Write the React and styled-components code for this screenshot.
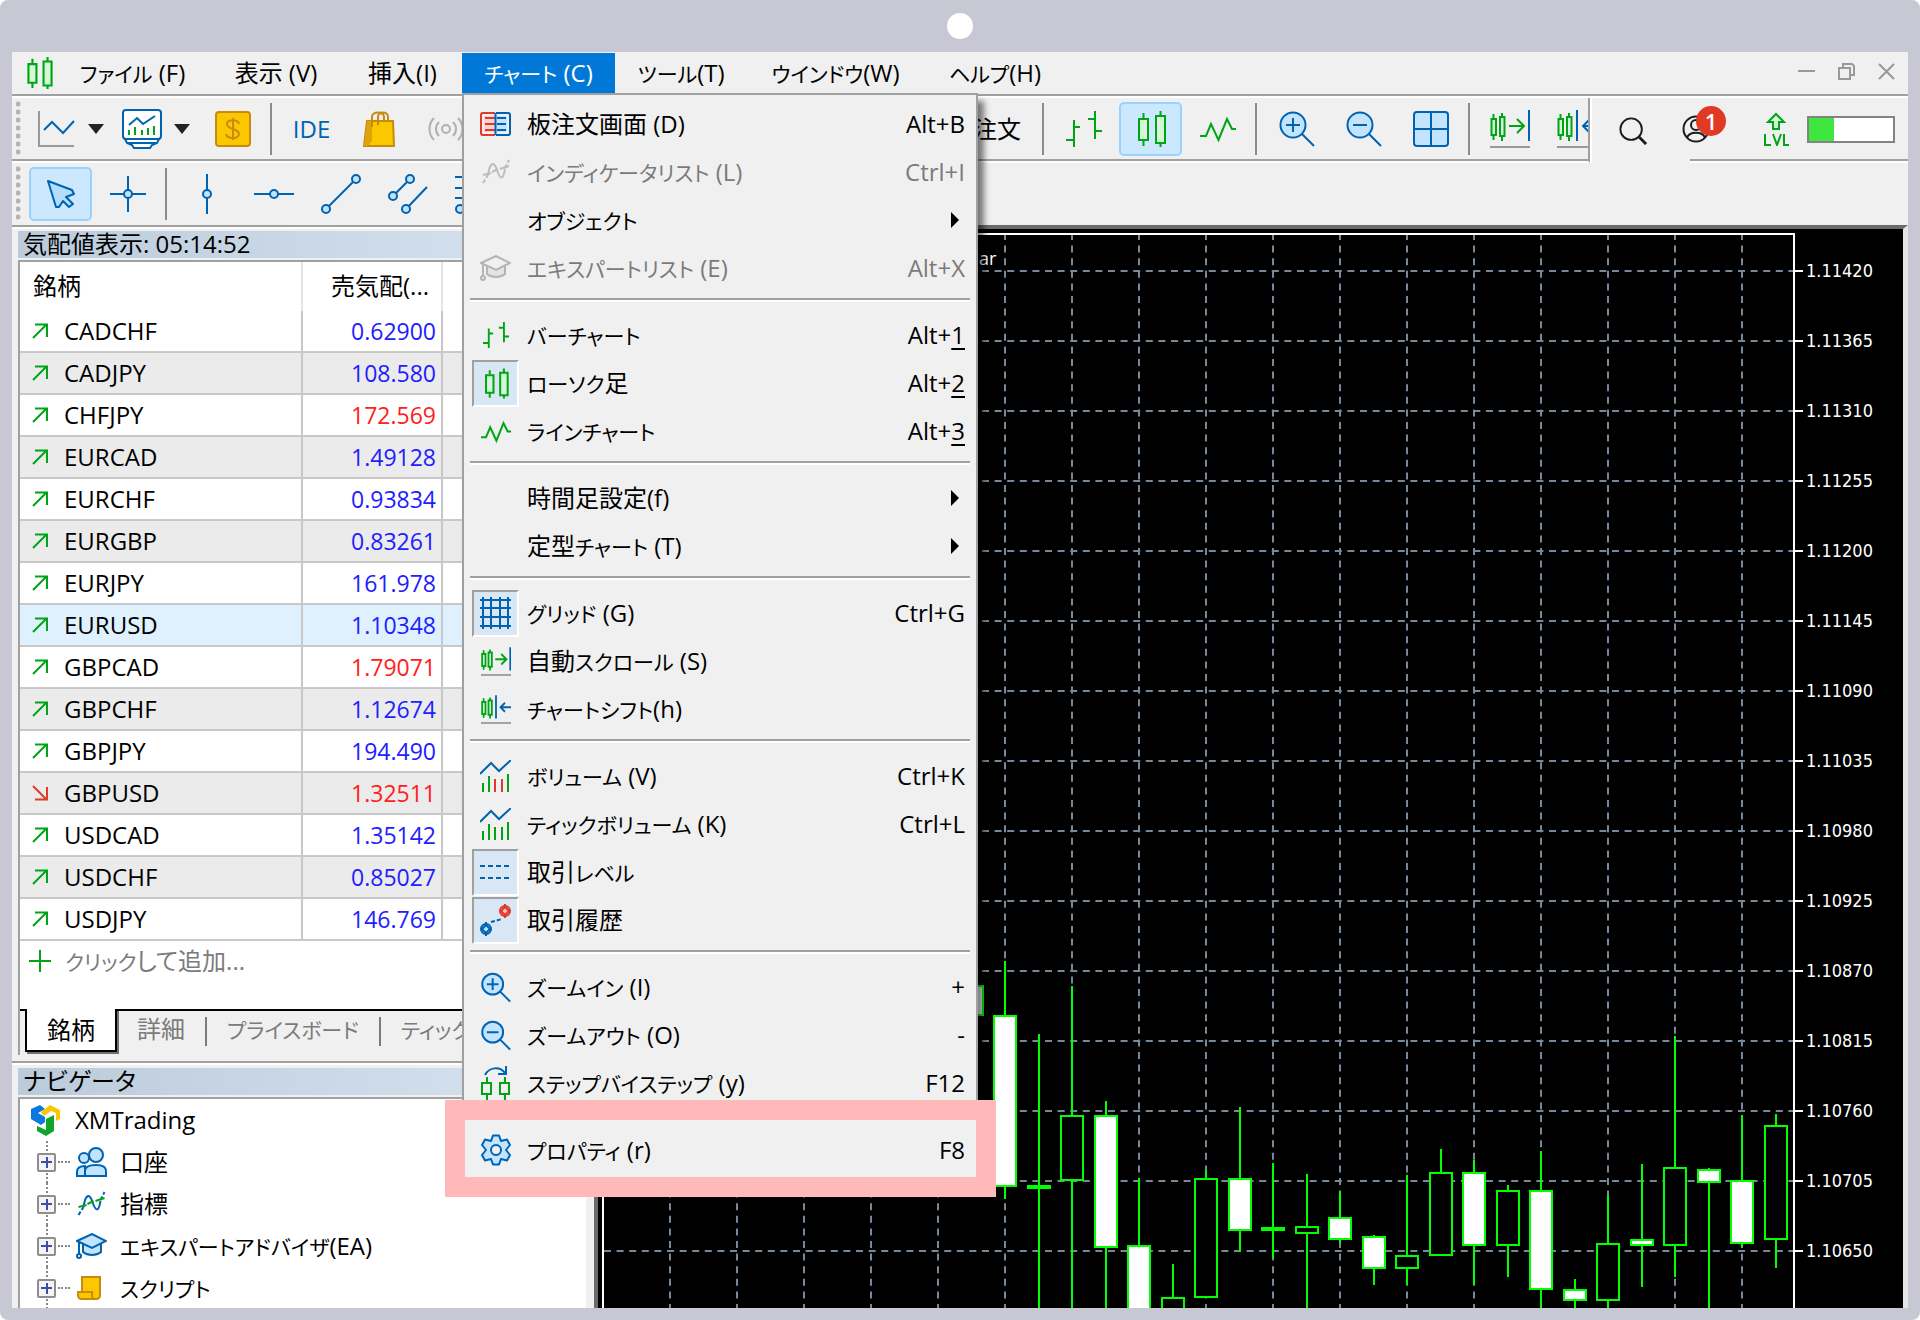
import React, { useState } from 'react';
import styled, { createGlobalStyle } from 'styled-components';

const GREEN = '#00a516';
const BLUE = '#0063b1';
const SKY = '#c3e4ff';
const RED = '#e03a2a';
const LINE = '#a0a0a0';

const GlobalStyle = createGlobalStyle`
  * { box-sizing: border-box; }
  body {
    margin: 0;
    background: #fff;
    color: #000;
    font-family: 'Open Sans', 'Noto Sans CJK JP', sans-serif;
    font-size: 24px;
    line-height: 32px;
    font-feature-settings: 'palt';
  }
  button {
    margin: 0;
    padding: 0;
    border: 0;
    background: none;
    color: inherit;
    font: inherit;
    font-feature-settings: inherit;
  }
  ul { list-style: none; margin: 0; padding: 0; }
  svg { display: block; flex: none; }
`;

/* ---------- frame ---------- */

const Device = styled.div`
  display: flex;
  flex-direction: column;
  height: 100vh;
  padding: 0 12px 12px;
  border-radius: 8px;
  background: #c8c8d4;
`;

const Camera = styled.div`
  display: flex;
  flex: none;
  align-items: center;
  justify-content: center;
  height: 52px;

  &::after {
    content: '';
    width: 26px;
    height: 26px;
    border-radius: 50%;
    background: #fff;
  }
`;

const Screen = styled.main`
  display: flex;
  flex: 1;
  flex-direction: column;
  min-height: 0;
  background: #f0f0f0;
`;

/* katakana is set a little smaller than the kanji around it */
const Kana = styled.span`
  font-size: 21px;
`;

const Label = ({ children }) => (
  <span>
    {children.split(/([ァ-ヴー]+)/).map((part, i) => (i % 2 ? <Kana key={i}>{part}</Kana> : part))}
  </span>
);

/* ---------- menu bar ---------- */

const MenuBar = styled.nav`
  display: flex;
  flex: none;
  height: 46px;
  padding: 1px 13px 0 14px;
  border-bottom: 2px solid #fff;
  box-shadow: inset 0 -2px ${LINE};
`;

const AppIcon = styled.span`
  display: flex;
  align-items: center;
  width: 30px;
  height: 40px;
`;

const MenuSlot = styled.div`
  position: relative;
  width: ${p => p.$width}px;
  height: 40px;
`;

const MenuTitle = styled.button`
  width: 100%;
  height: 40px;
  white-space: nowrap;
  background: ${p => (p.$open ? '#0078d7' : 'none')};
  color: ${p => (p.$open ? '#fff' : '#000')};
`;

const WindowButtons = styled.div`
  display: flex;
  align-items: center;
  gap: 23px;
  height: 36px;
  margin-left: auto;
`;

/* ---------- dropdown ---------- */

const Dropdown = styled.div`
  position: absolute;
  z-index: 5;
  top: 100%;
  left: 0;
  width: 516px;
  padding: 5px 0;
  border: 2px solid ${LINE};
  background: #f0f0f0;
  box-shadow: 6px 8px 6px rgba(0, 0, 0, 0.5);
`;

const MenuItem = styled.button`
  position: relative;
  display: flex;
  align-items: center;
  width: 100%;
  height: 48px;
  padding: 0 11px 0 8px;
  text-align: left;
  white-space: nowrap;
  color: ${p => (p.$off ? '#7b7b7b' : '#000')};
`;

const IconBox = styled.span`
  display: flex;
  align-items: center;
  justify-content: center;
  width: 47px;
  height: 47px;
  margin-right: 8px;
  border: 2px solid;
  border-color: ${p => (p.$on ? `${LINE} #fff #fff ${LINE}` : 'transparent')};
  background: ${p => (p.$on ? '#d9e6f3' : 'none')};
`;

const Shortcut = styled.span`
  margin-left: auto;

  u { text-underline-offset: 4px; text-decoration-thickness: 2px; }
`;

const SubArrow = styled.i`
  margin: 0 6px 0 auto;
  border: 8px solid transparent;
  border-left-color: #000;
  border-right: 0;
`;

const MenuRule = styled.hr`
  height: 4px;
  margin: 6px 6px 9px;
  border: 0;
  border-top: 2px solid ${LINE};
  background: #fff;
`;

const Highlight = styled.span`
  position: absolute;
  top: -26px;
  right: -20px;
  bottom: -23px;
  left: -19px;
  border: 20px solid #ffb9b9;
`;

/* ---------- toolbars ---------- */

const Toolbar = styled.div`
  display: flex;
  flex: none;
  align-items: center;
  height: ${p => (p.$low ? 62 : 65)}px;
`;

const ToolRow = styled.div`
  display: flex;
  flex: none;
  align-items: center;
  height: 65px;
  padding-bottom: 1px;
  border-bottom: 2px solid #fff;
  box-shadow: inset 0 -2px ${LINE};
`;

const MainRow = styled(ToolRow)`
  flex: 1;
  min-width: 0;
  overflow: hidden;
  border-right: 2px solid ${LINE};
`;

const ToolGap = styled.div`
  display: flex;
  flex: none;
  align-items: center;
  justify-content: center;
  width: 100px;
  height: 65px;
  padding-right: 16px;
  border-left: 2px solid #fff;
`;

const Grip = styled.span`
  flex: none;
  width: 5px;
  height: 56px;
  margin: 0 6px 0 4px;
  background: radial-gradient(circle at 2px 3px, #b4b4b4 2px, transparent 3px) 0 0 / 5px 8px;
`;

const Tool = styled.button`
  display: flex;
  flex: none;
  align-items: center;
  justify-content: center;
  width: 63px;
  height: 54px;
  margin: 0 2px;
  border: 2px solid ${p => (p.$on ? '#99d1ff' : 'transparent')};
  border-radius: 5px;
  background: ${p => (p.$on ? '#cce8ff' : 'none')};
  color: ${BLUE};
`;

const SplitTool = styled.button`
  display: flex;
  flex: none;
  align-items: center;
  justify-content: space-between;
  width: 86px;
  height: 54px;
  padding: 0 9px;
`;

const DownArrow = styled.i`
  border: 8px solid transparent;
  border-top: 10px solid #222;
  border-bottom: 0;
`;

const ToolRule = styled.span`
  flex: none;
  width: 2px;
  height: 52px;
  margin: 0 6px 0 4px;
  background: #8c8c8c;
`;

const OrderButton = styled.button`
  flex: none;
  height: 54px;
  margin-left: 477px;
  padding: 0 17px;
`;

const StatusRow = styled(ToolRow)`
  padding-right: 13px;
`;

const Account = styled.button`
  position: relative;
  width: 44px;
  height: 28px;
  margin: 0 37px 0 -8px;
`;

const Badge = styled.span`
  position: absolute;
  top: -9px;
  left: 14px;
  width: 30px;
  height: 30px;
  border-radius: 50%;
  background: #e03a24;
  color: #fff;
  font-size: 22px;
  font-weight: 600;
  line-height: 30px;
`;

const Meter = styled.div`
  width: 88px;
  height: 27px;
  margin-left: 18px;
  border: 2px solid #838383;
  background: linear-gradient(90deg, #3fe63f 30%, #fff 30%);
`;

/* ---------- left column ---------- */

const Body = styled.div`
  display: flex;
  flex: 1;
  min-height: 0;
`;

const Side = styled.aside`
  display: flex;
  flex: none;
  flex-direction: column;
  width: 582px;
  padding: 4px 8px 0 6px;
  border-top: 2px solid ${LINE};
  box-shadow: inset 0 2px #fff;
`;

const PanelTitle = styled.h2`
  flex: none;
  height: 27px;
  margin: 0 0 2px;
  padding-left: 5px;
  background: linear-gradient(90deg, #bccbda, #d7e4f2);
  font-size: 24px;
  font-weight: 400;
  line-height: 25px;
`;

const Watch = styled.div`
  flex: none;
  height: 749px;
  border-top: 2px solid ${LINE};
  border-left: 2px solid ${LINE};
  background: #fff;
`;

const Quotes = styled.table`
  width: 100%;
  border-collapse: collapse;
  table-layout: fixed;

  th, td {
    height: 42px;
    padding: 0 5px;
    border-right: 2px solid #c8c8c8;
    border-bottom: 2px solid #c8c8c8;
    text-align: left;
    font-weight: 400;
  }
  th { height: 48px; border-color: #e4e4e4; border-bottom-color: transparent; }
  th:first-child { width: 282px; padding-left: 13px; }
  th:nth-child(2) { width: 140px; text-align: right; padding-right: 12px; }
  td:nth-child(2) { text-align: right; }
  th:last-child, td:last-child { border-right: 0; }
`;

const Quote = styled.tr`
  background: ${p => (p.$active ? '#dff1fe' : p.$odd ? '#ebebeb' : '#fff')};
`;

const Ticker = styled.span`
  display: flex;
  align-items: center;
  gap: 16px;
  padding-left: 7px;
`;

const Price = styled.td`
  color: ${p => (p.$down ? '#ff2020' : '#2020ff')};
  font-size: 23px;
`;

const AddRow = styled.button`
  display: flex;
  align-items: center;
  gap: 14px;
  height: 40px;
  padding-left: 9px;
  color: #7b7b7b;
`;

const Tabs = styled.div`
  display: flex;
  flex: none;
  height: 46px;
  padding-left: 5px;
  overflow: hidden;
  border-left: 2px solid ${LINE};
  box-shadow: inset 0 2px #000;
`;

const Tab = styled.button`
  flex: none;
  height: ${p => (p.$on ? 43 : 36)}px;
  padding: 0 20px;
  margin-top: ${p => (p.$on ? 0 : 2)}px;
  background: ${p => (p.$on ? '#fff' : 'none')};
  border: ${p => (p.$on ? '2px solid #000' : '0')};
  border-top: 0;
  box-shadow: ${p => (p.$on ? '2px 2px #707070' : 'none')};
  color: ${p => (p.$on ? '#000' : '#7b7b7b')};
  line-height: 36px;
  white-space: nowrap;
`;

const TabRule = styled.span`
  flex: none;
  width: 2px;
  height: 29px;
  margin-top: 8px;
  background: #7b7b7b;
`;

const Divider = styled.div`
  flex: none;
  height: 4px;
  margin: 6px -8px 3px -6px;
  border-top: 2px solid ${LINE};
  background: #fff;
`;

const Tree = styled.ul`
  flex: 1;
  min-height: 0;
  overflow: hidden;
  border-top: 2px solid ${LINE};
  border-left: 2px solid ${LINE};
  background: #fff;
`;

const Root = styled.li`
  display: flex;
  align-items: center;
  gap: 15px;
  height: 42px;
  padding-left: 10px;
`;

const Node = styled.li`
  display: flex;
  align-items: center;
  height: 42px;
  padding-left: 17px;
  background: linear-gradient(#888 50%, transparent 50%) 26px 0 / 2px 4px repeat-y;
`;

const Expand = styled.button`
  width: 19px;
  height: 19px;
  border: 2px solid #8e8e8e;
  border-radius: 2px;
  background:
    linear-gradient(#3b4ea8, #3b4ea8) center / 11px 2px no-repeat,
    linear-gradient(#3b4ea8, #3b4ea8) center / 2px 11px no-repeat,
    #f4f4f4;
`;

const Stub = styled.span`
  width: 12px;
  margin: 0 6px 0 2px;
  border-top: 2px dotted #888;
`;

const NodeLabel = styled.span`
  margin-left: 13px;
  white-space: nowrap;
`;

/* ---------- chart ---------- */

const ChartPane = styled.section`
  display: flex;
  flex: 1;
  min-width: 0;
  padding: 4px 0 0 4px;
  border-top: 4px solid #6b6b6b;
  border-left: 4px solid #6b6b6b;
  border-right: 5px solid #e6e6e6;
  background: #000;
`;

const Plot = styled.div`
  position: relative;
  flex: 1;
  min-width: 0;
  overflow: hidden;
  border: 2px solid #fff;
  border-bottom: 0;
`;

const ChartTitle = styled.span`
  position: absolute;
  top: 7px;
  left: 375px;
  color: #fff;
  font-size: 18px;
`;

const Scale = styled.ul`
  width: 108px;
  padding-top: 3px;
  overflow: hidden;
  color: #fff;
  font-family: 'DejaVu Sans Condensed', 'Open Sans', sans-serif;
  font-size: 18px;

  li { display: flex; align-items: center; gap: 3px; height: 70px; }
  li::before { content: ''; width: 8px; height: 2px; background: #fff; }
`;

/* ---------- icons ---------- */

const Svg = ({ w = 36, h = 36, box, children, stroke = BLUE, ...rest }) => (
  <svg width={w} height={h} viewBox={box || '0 0 36 36'} fill="none" stroke={stroke} strokeWidth="2" aria-hidden="true" {...rest}>
    {children}
  </svg>
);

const BarsIcon = p => (
  <Svg stroke={GREEN} {...p}>
    <path d="M8 9v27M0 29h8M8 16h6M29 0v28M22 8h7M29 20h7" />
  </Svg>
);

const CandlesIcon = p => (
  <Svg stroke={GREEN} {...p}>
    <path d="M10.5 2v5M10.5 29v6M27.5 0v5M27.5 32v4" />
    <path d="M6 8h9v21H6zM23 5h9v27h-9z" fill="#d5f7d8" />
  </Svg>
);

const LineIcon = p => (
  <Svg stroke={GREEN} {...p}>
    <path d="M0 25h6l5-12 7.5 16L27 8l5 10h4" />
  </Svg>
);

const ZoomIcon = ({ minus, ...p }) => (
  <Svg {...p}>
    <circle cx="14" cy="14" r="12.5" fill={SKY} />
    <path d={minus ? 'M7 14h14M23 23l12 12' : 'M7 14h14M14 7v14M23 23l12 12'} />
  </Svg>
);

const TileIcon = p => (
  <Svg {...p}>
    <rect x="1" y="1" width="34" height="34" rx="3" fill={SKY} />
    <path d="M18 1v34M1 18h34" />
  </Svg>
);

const ScrollIcon = ({ shift, ...p }) => (
  <Svg w={40} h={38} box="0 0 40 38" stroke={GREEN} {...p}>
    <path d="M3.5 4v5M3.5 25v5M12 3v4M12 26v5" />
    <path d="M1.5 9h4.5v16H1.5zM10 7h4.5v19H10z" fill="#d5f7d8" />
    {shift ? (
      <path d="M20 0v31M40 16H26M32 10l-6 6 6 6" stroke={BLUE} />
    ) : (
      <>
        <path d="M19 16h14M27 9l7 7-7 7" />
        <path d="M39 0v31" stroke={BLUE} />
      </>
    )}
    <path d="M0 37h40" stroke="#9a9a9a" />
  </Svg>
);

const DepthIcon = p => (
  <Svg w={31} h={24} box="0 0 31 24" {...p}>
    <path d="M15 1H3a2 2 0 0 0-2 2v18a2 2 0 0 0 2 2h12" stroke={RED} />
    <path d="M4 4h11v16H4z" fill="#ffd0cc" stroke="none" />
    <path d="M16 4h11v16H16z" fill={SKY} stroke="none" />
    <path d="M5 6h10M5 12h10M5 18h10" stroke={RED} />
    <path d="M16 1h12a2 2 0 0 1 2 2v18a2 2 0 0 1-2 2H16M15.5 1v22M17 6h9M17 12h9M17 18h9" />
  </Svg>
);

const IndicatorIcon = ({ off, ...p }) => (
  <Svg w={30} h={26} box="0 0 30 26" stroke={off ? '#bdbdbd' : BLUE} {...p}>
    <path d="M2 24l5-8" strokeDasharray="4 2" />
    <path d="M7 16C9 3 13 2 16 11s6 11 8-1" />
    <path d="M24 9l4-8" strokeDasharray="4 2" />
    <path d="M2 16l8-2M11 13l6-3M19 10l9-3" stroke={off ? '#bdbdbd' : GREEN} />
  </Svg>
);

const HatIcon = ({ off, ...p }) => (
  <Svg w={31} h={26} box="0 0 31 26" stroke={off ? '#b4b4b4' : BLUE} {...p}>
    <path d="M7 10v9c5 4 13 4 18 0v-9" fill={off ? '#e4e4e4' : SKY} />
    <path d="M1 8l15-7 14 7-14 7z" fill={off ? '#f0f0f0' : SKY} />
    <path d="M3 9v12" />
    <circle cx="3" cy="23" r="2" />
  </Svg>
);

const MeshIcon = p => (
  <Svg w={31} h={32} box="0 0 31 32" {...p}>
    <path d="M3 0v32M11 0v32M20 0v32M28 0v32M0 3h31M0 11h31M0 20h31M0 29h31" />
  </Svg>
);

const VolumeIcon = ({ mixed, ...p }) => (
  <Svg w={31} h={32} box="0 0 31 32" {...p}>
    <path d="M0 14L11 3l8 8L31 0" />
    <path d="M3 23v9M9 16v16M28 14v18" stroke={GREEN} />
    <path d="M15 19v13M22 19v13" stroke={mixed ? RED : GREEN} />
  </Svg>
);

const LevelsIcon = p => (
  <Svg w={31} h={16} box="0 0 31 16" strokeDasharray="5 3" {...p}>
    <path d="M0 2h31M0 14h31" />
  </Svg>
);

const HistoryIcon = p => (
  <Svg w={31} h={32} box="0 0 31 32" {...p}>
    <path d="M6 18v14" />
    <circle cx="6" cy="25" r="5" fill={SKY} />
    <path d="M6 21l4 4-4 4-4-4z" />
    <path d="M11 18l11-3" strokeDasharray="4 2" />
    <path d="M25 0v14" stroke={RED} />
    <circle cx="25" cy="7" r="5" fill="#ffc9c4" stroke={RED} />
    <path d="M25 3l4 4-4 4-4-4z" stroke={RED} />
  </Svg>
);

const StepIcon = p => (
  <Svg w={31} h={34} box="0 0 31 34" {...p}>
    <path d="M5 9C9 1 20 0 25 7M26 0v8h-8" />
    <path d="M7 11v6M7 28v6M25 11v6M25 28v6M2 17h9v11H2zM20 17h9v11h-9z" stroke={GREEN} />
  </Svg>
);

const GearIcon = p => (
  <Svg w={30} h={32} box="0 0 30 32" {...p}>
    <path d="M12 1.5H18L20 7L26 5.5L29 11L25 16L29 21L26 26.5L20 25L18 30.5H12L10 25L4 26.5L1 21L5 16L1 11L4 5.5L10 7Z" fill={SKY} strokeLinejoin="round" />
    <circle cx="15" cy="16" r="5" fill="#f0f0f0" />
  </Svg>
);

const TrendArrow = ({ down }) => (
  <Svg w={16} h={16} box="0 0 16 16" stroke={down ? RED : GREEN}>
    <path d={down ? 'M1 1l14 14M3 14.5h12V2' : 'M1 15L15 1M3 1.5h12V14'} />
  </Svg>
);

const LogoIcon = () => (
  <svg width="30" height="32" viewBox="0 0 30 32" aria-hidden="true">
    <path d="M10 1L1 5v10l10 6 4-3v-5l-7-4 7-4z" fill="#0a78dc" />
    <path d="M11 8l9-7 10 5v9l-4 2V9l-5-2-7 5z" fill="#fbc800" />
    <path d="M16 15l8-4v16l-8 5-9-5v-5l9 4z" fill="#0da52a" />
  </svg>
);

const PeopleIcon = () => (
  <Svg w={31} h={30} box="0 0 31 30">
    <circle cx="8" cy="11" r="5" fill={SKY} />
    <path d="M1 29v-4c0-4 3-6 8-6v10z" fill={SKY} />
    <circle cx="20" cy="8" r="7" fill={SKY} />
    <path d="M9 29v-5c0-4 4-6 11-6s10 2 10 6v5z" fill={SKY} />
  </Svg>
);

const ScriptIcon = () => (
  <Svg w={31} h={24} box="0 0 31 24" stroke="#c98a10">
    <path d="M6 1h18v18c0 3-2 4-4 4H6z" fill="#fbc800" />
    <path d="M2 16h14v3c0 3 1 4 3 4H6c-3 0-4-2-4-4z" fill="#fbc800" />
  </Svg>
);

/* ---------- data ---------- */

const menuIcon = { w: 30, h: 31, strokeWidth: 2.4 };

const chartMenu = [
  { icon: <DepthIcon />, label: '板注文画面 (D)', keys: 'Alt+B' },
  { icon: <IndicatorIcon off />, label: 'インディケータリスト (L)', keys: 'Ctrl+I', off: true },
  { label: 'オブジェクト', sub: true },
  { icon: <HatIcon off />, label: 'エキスパートリスト (E)', keys: 'Alt+X', off: true },
  null,
  { icon: <BarsIcon w={26} h={26} strokeWidth={2.6} />, label: 'バーチャート', keys: 'Alt+', under: '1' },
  { icon: <CandlesIcon {...menuIcon} />, label: 'ローソク足', keys: 'Alt+', under: '2', on: true },
  { icon: <LineIcon {...menuIcon} />, label: 'ラインチャート', keys: 'Alt+', under: '3' },
  null,
  { label: '時間足設定(f)', sub: true },
  { label: '定型チャート (T)', sub: true },
  null,
  { icon: <MeshIcon />, label: 'グリッド (G)', keys: 'Ctrl+G', on: true },
  { icon: <ScrollIcon {...menuIcon} />, label: '自動スクロール (S)' },
  { icon: <ScrollIcon shift {...menuIcon} />, label: 'チャートシフト(h)' },
  null,
  { icon: <VolumeIcon mixed />, label: 'ボリューム (V)', keys: 'Ctrl+K' },
  { icon: <VolumeIcon />, label: 'ティックボリューム (K)', keys: 'Ctrl+L' },
  { icon: <LevelsIcon />, label: '取引レベル', on: true },
  { icon: <HistoryIcon />, label: '取引履歴', on: true },
  null,
  { icon: <ZoomIcon {...menuIcon} />, label: 'ズームイン (I)', keys: '+' },
  { icon: <ZoomIcon minus {...menuIcon} />, label: 'ズームアウト (O)', keys: '-' },
  { icon: <StepIcon />, label: 'ステップバイステップ (y)', keys: 'F12' },
  null,
  { icon: <GearIcon />, label: 'プロパティ (r)', keys: 'F8', marked: true },
];

const menus = [
  { label: 'ファイル (F)', width: 153 },
  { label: '表示 (V)', width: 134 },
  { label: '挿入(I)', width: 119 },
  { label: 'チャート (C)', width: 153, items: chartMenu },
  { label: 'ツール(T)', width: 132 },
  { label: 'ウインドウ(W)', width: 177 },
  { label: 'ヘルプ(H)', width: 142 },
];

const quotes = [
  ['CADCHF', '0.62900'],
  ['CADJPY', '108.580'],
  ['CHFJPY', '172.569', true],
  ['EURCAD', '1.49128'],
  ['EURCHF', '0.93834'],
  ['EURGBP', '0.83261'],
  ['EURJPY', '161.978'],
  ['EURUSD', '1.10348'],
  ['GBPCAD', '1.79071', true],
  ['GBPCHF', '1.12674'],
  ['GBPJPY', '194.490'],
  ['GBPUSD', '1.32511', true],
  ['USDCAD', '1.35142'],
  ['USDCHF', '0.85027'],
  ['USDJPY', '146.769'],
];

const prices = [
  '1.11420', '1.11365', '1.11310', '1.11255', '1.11200', '1.11145', '1.11090', '1.11035',
  '1.10980', '1.10925', '1.10870', '1.10815', '1.10760', '1.10705', '1.10650',
];

// high, body top, body bottom, low, filled
const candles = [
  [751, 751, 780, 780, 1],
  [726, 781, 951, 964, 1],
  [799, 951, 953, 1100, 0],
  [751, 881, 945, 1100, 0],
  [866, 881, 1012, 1100, 1],
  [943, 1011, 1100, 1100, 1],
  [1029, 1063, 1100, 1100, 0],
  [935, 944, 1062, 1062, 0],
  [872, 944, 995, 1017, 1],
  [928, 993, 995, 1023, 0],
  [939, 992, 998, 1100, 0],
  [956, 983, 1004, 1008, 1],
  [1000, 1002, 1033, 1050, 1],
  [940, 1021, 1033, 1050, 0],
  [914, 938, 1020, 1020, 0],
  [925, 938, 1010, 1050, 1],
  [950, 956, 1010, 1042, 0],
  [916, 956, 1054, 1100, 1],
  [1044, 1055, 1065, 1100, 1],
  [960, 1009, 1065, 1100, 0],
  [929, 1005, 1010, 1052, 1],
  [801, 933, 1010, 1042, 0],
  [933, 935, 947, 1100, 1],
  [880, 946, 1008, 1012, 1],
  [879, 891, 1004, 1033, 0],
];

const Candles = () => (
  <svg width="100%" height="100%">
    <g stroke="#778899" strokeWidth="2" strokeDasharray="7 5.6">
      {Array.from({ length: 17 }, (_, i) => (
        <line key={i} x1={66 + i * 67} x2={66 + i * 67} y1="-2" y2="1100" />
      ))}
      {prices.map((p, i) => (
        <line key={p} x1="0" x2="1190" y1={36 + i * 70} y2={36 + i * 70} />
      ))}
    </g>
    <g stroke="#00ff00" strokeWidth="2">
      {candles.map(([high, top, bottom, low, filled], i) => {
        const x = Math.round(367.5 + i * 33.5);
        return (
          <g key={i}>
            <line x1={x} x2={x} y1={high} y2={low} />
            <rect x={x - 11} y={top} width="22" height={bottom - top} fill={filled ? '#fff' : '#000'} />
          </g>
        );
      })}
    </g>
  </svg>
);

const ChartMenu = ({ items }) => (
  <Dropdown role="menu">
    {items.map((item, i) =>
      item === null ? (
        <MenuRule key={i} />
      ) : (
        <MenuItem key={i} role="menuitem" $off={item.off}>
          <IconBox $on={item.on}>{item.icon}</IconBox>
          <Label>{item.label}</Label>
          {item.keys && (
            <Shortcut>
              {item.keys}
              {item.under && <u>{item.under}</u>}
            </Shortcut>
          )}
          {item.sub && <SubArrow />}
          {item.marked && <Highlight />}
        </MenuItem>
      )
    )}
  </Dropdown>
);

const App = () => {
  const [open, setOpen] = useState('チャート (C)');
  const [active, setActive] = useState('EURUSD');

  return (
    <>
      <GlobalStyle />
      <Device>
        <Camera />
        <Screen>
          <MenuBar>
            <AppIcon><CandlesIcon w={28} h={32} box="4 0 30 36" strokeWidth={2.4} /></AppIcon>
            {menus.map(m => (
              <MenuSlot key={m.label} $width={m.width}>
                <MenuTitle $open={open === m.label} onClick={() => setOpen(m.label)}>
                  <Label>{m.label}</Label>
                </MenuTitle>
                {open === m.label && m.items && <ChartMenu items={m.items} />}
              </MenuSlot>
            ))}
            <WindowButtons>
              <button aria-label="minimize">
                <Svg w={17} h={17} box="0 0 17 17" stroke="#999"><path d="M0 8h17" /></Svg>
              </button>
              <button aria-label="restore">
                <Svg w={17} h={17} box="0 0 17 17" stroke="#999">
                  <path d="M1 5h11v11H1zM5 4V1h9l2 2v9h-3" />
                </Svg>
              </button>
              <button aria-label="close">
                <Svg w={17} h={17} box="0 0 17 17" stroke="#999"><path d="M1 1l15 15M16 1L1 16" /></Svg>
              </button>
            </WindowButtons>
          </MenuBar>

          <Toolbar>
            <MainRow>
              <Grip />
              <SplitTool aria-label="line">
                <Svg w={40} h={36} box="0 0 40 36">
                  <path d="M3 0v35h35" stroke="#9a9a9a" />
                  <path d="M8 19l8-8 11 11 11-12" />
                </Svg>
                <DownArrow />
              </SplitTool>
              <SplitTool aria-label="indicators">
                <Svg w={40} h={40} box="0 0 40 40">
                  <path d="M3 30h34l-2 4-5 2-2 3H12l-2-3-5-2z" fill="#fff" />
                  <rect x="1" y="1" width="38" height="29" rx="3" fill="#fff" />
                  <path d="M7 16l8-7 6 6 12-8" />
                  <path d="M7 21v5M13 18v8M20 21v5M26 19v7M32 17v9" stroke={GREEN} />
                  <path d="M5 34h30" />
                </Svg>
                <DownArrow />
              </SplitTool>
              <Tool aria-label="dollar">
                <Svg stroke="#c98a10">
                  <rect x="1" y="1" width="34" height="34" rx="3" fill="#fbc800" />
                  <path d="M24 13c-1-5-12-5-12 0 0 6 12 4 12 10 0 6-12 5-13 0M18 7v22" />
                </Svg>
              </Tool>
              <ToolRule />
              <Tool>IDE</Tool>
              <Tool aria-label="market">
                <Svg w={32} h={36} box="0 0 32 36" stroke="#c98a10">
                  <path d="M4 10h26l1 25H1z" fill="#fbc800" />
                  <path d="M4 10h5v20l-4 5H1z" fill="#dba40a" stroke="none" />
                  <path d="M9 16V6c0-6 12-6 12 0v4M15 14V6c0-6 10-6 10 0v4" />
                </Svg>
              </Tool>
              <Tool aria-label="signals">
                <Svg stroke="#b0b0b0">
                  <circle cx="18" cy="18" r="4" />
                  <path d="M11 11c-4 4-4 10 0 14M25 11c4 4 4 10 0 14M6 7c-6 6-6 16 0 22M30 7c6 6 6 16 0 22" />
                </Svg>
              </Tool>
              <OrderButton>注文</OrderButton>
              <ToolRule />
              <Tool aria-label="bars"><BarsIcon /></Tool>
              <Tool aria-label="candles" $on><CandlesIcon /></Tool>
              <Tool aria-label="polyline"><LineIcon /></Tool>
              <ToolRule />
              <Tool aria-label="zoom in"><ZoomIcon /></Tool>
              <Tool aria-label="zoom out"><ZoomIcon minus /></Tool>
              <Tool aria-label="tile"><TileIcon /></Tool>
              <ToolRule />
              <Tool aria-label="scroll"><ScrollIcon /></Tool>
              <Tool aria-label="shift"><ScrollIcon shift /></Tool>
            </MainRow>
            <ToolGap>
              <button aria-label="search">
                <Svg w={28} h={28} box="0 0 30 30" stroke="#1c1c1c">
                  <circle cx="13" cy="13" r="11.5" />
                  <path d="M21 21l8 8" strokeWidth="3" />
                </Svg>
              </button>
            </ToolGap>
            <StatusRow>
              <Account aria-label="account">
                <Svg w={28} h={28} box="0 0 28 28" stroke="#1c1c1c">
                  <circle cx="14" cy="14" r="12.5" />
                  <circle cx="14" cy="10" r="5" />
                  <path d="M5 23c2-7 16-7 18 0" />
                </Svg>
                <Badge>1</Badge>
              </Account>
              <Svg w={26} h={34} box="0 0 26 34" stroke={GREEN}>
                <path d="M13 2l8 8h-5v7h-6v-7H5z" fill="#d5f7d8" />
                <path d="M2 22v11h6M10 22l4 11 4-11M21 22v11h5" />
              </Svg>
              <Meter />
            </StatusRow>
          </Toolbar>

          <Toolbar $low>
            <Grip />
            <Tool aria-label="cursor" $on>
              <Svg w={28} h={28} box="0 0 28 28">
                <path d="M1 1l24 9 2 4-8 3 7 7-4 3-6-6-4 6H9z" fill="#b4dcfb" strokeLinejoin="round" />
              </Svg>
            </Tool>
            <Tool aria-label="crosshair">
              <Svg><path d="M18 0v36M0 18h36" /><circle cx="18" cy="18" r="4" fill={SKY} /></Svg>
            </Tool>
            <ToolRule />
            <Tool aria-label="vertical line">
              <Svg w={40} h={40} box="0 0 40 40"><path d="M20 0v40" /><circle cx="20" cy="20" r="4" fill={SKY} /></Svg>
            </Tool>
            <Tool aria-label="horizontal line">
              <Svg w={40} h={40} box="0 0 40 40"><path d="M0 20h40" /><circle cx="20" cy="20" r="4" fill={SKY} /></Svg>
            </Tool>
            <Tool aria-label="trend line">
              <Svg w={40} h={40} box="0 0 40 40">
                <path d="M5 35L35 5" /><circle cx="5" cy="35" r="4" fill={SKY} /><circle cx="35" cy="5" r="4" fill={SKY} />
              </Svg>
            </Tool>
            <Tool aria-label="channel">
              <Svg w={40} h={40} box="0 0 40 40">
                <path d="M5 22L22 5M18 35l21-22" />
                <circle cx="5" cy="22" r="4" fill={SKY} /><circle cx="22" cy="5" r="4" fill={SKY} /><circle cx="18" cy="35" r="4" fill={SKY} />
              </Svg>
            </Tool>
            <Tool aria-label="fibonacci">
              <Svg w={40} h={40} box="0 0 40 40">
                <path d="M0 3h40M0 14h40M0 24h40M5 35h35" /><circle cx="5" cy="35" r="4" fill={SKY} />
              </Svg>
            </Tool>
          </Toolbar>

          <Body>
            <Side>
              <PanelTitle>気配値表示: 05:14:52</PanelTitle>
              <Watch>
                <Quotes>
                  <thead>
                    <tr><th>銘柄</th><th>売気配(...</th><th /></tr>
                  </thead>
                  <tbody>
                    {quotes.map(([symbol, price, down], i) => (
                      <Quote key={symbol} $odd={i % 2 === 1} $active={symbol === active} onClick={() => setActive(symbol)}>
                        <td><Ticker><TrendArrow down={symbol === 'GBPUSD'} />{symbol}</Ticker></td>
                        <Price $down={down}>{price}</Price>
                        <td />
                      </Quote>
                    ))}
                  </tbody>
                </Quotes>
                <AddRow>
                  <Svg w={22} h={22} box="0 0 22 22" stroke={GREEN}><path d="M11 0v22M0 11h22" /></Svg>
                  <Label>クリックして追加...</Label>
                </AddRow>
              </Watch>
              <Tabs>
                <Tab $on>銘柄</Tab>
                <Tab>詳細</Tab>
                <TabRule />
                <Tab><Label>プライスボード</Label></Tab>
                <TabRule />
                <Tab><Label>ティック</Label></Tab>
              </Tabs>
              <Divider />
              <PanelTitle>ナビゲータ</PanelTitle>
              <Tree>
                <Root><LogoIcon />XMTrading</Root>
                <Node><Expand aria-label="expand" /><Stub /><PeopleIcon /><NodeLabel>口座</NodeLabel></Node>
                <Node><Expand aria-label="expand" /><Stub /><IndicatorIcon w={31} /><NodeLabel>指標</NodeLabel></Node>
                <Node><Expand aria-label="expand" /><Stub /><HatIcon /><NodeLabel><Label>エキスパートアドバイザ(EA)</Label></NodeLabel></Node>
                <Node><Expand aria-label="expand" /><Stub /><ScriptIcon /><NodeLabel><Label>スクリプト</Label></NodeLabel></Node>
                <Node />
              </Tree>
            </Side>
            <ChartPane>
              <Plot>
                <Candles />
                <ChartTitle>ar</ChartTitle>
              </Plot>
              <Scale>
                {prices.map(p => <li key={p}>{p}</li>)}
              </Scale>
            </ChartPane>
          </Body>
        </Screen>
      </Device>
    </>
  );
};

export default App;
